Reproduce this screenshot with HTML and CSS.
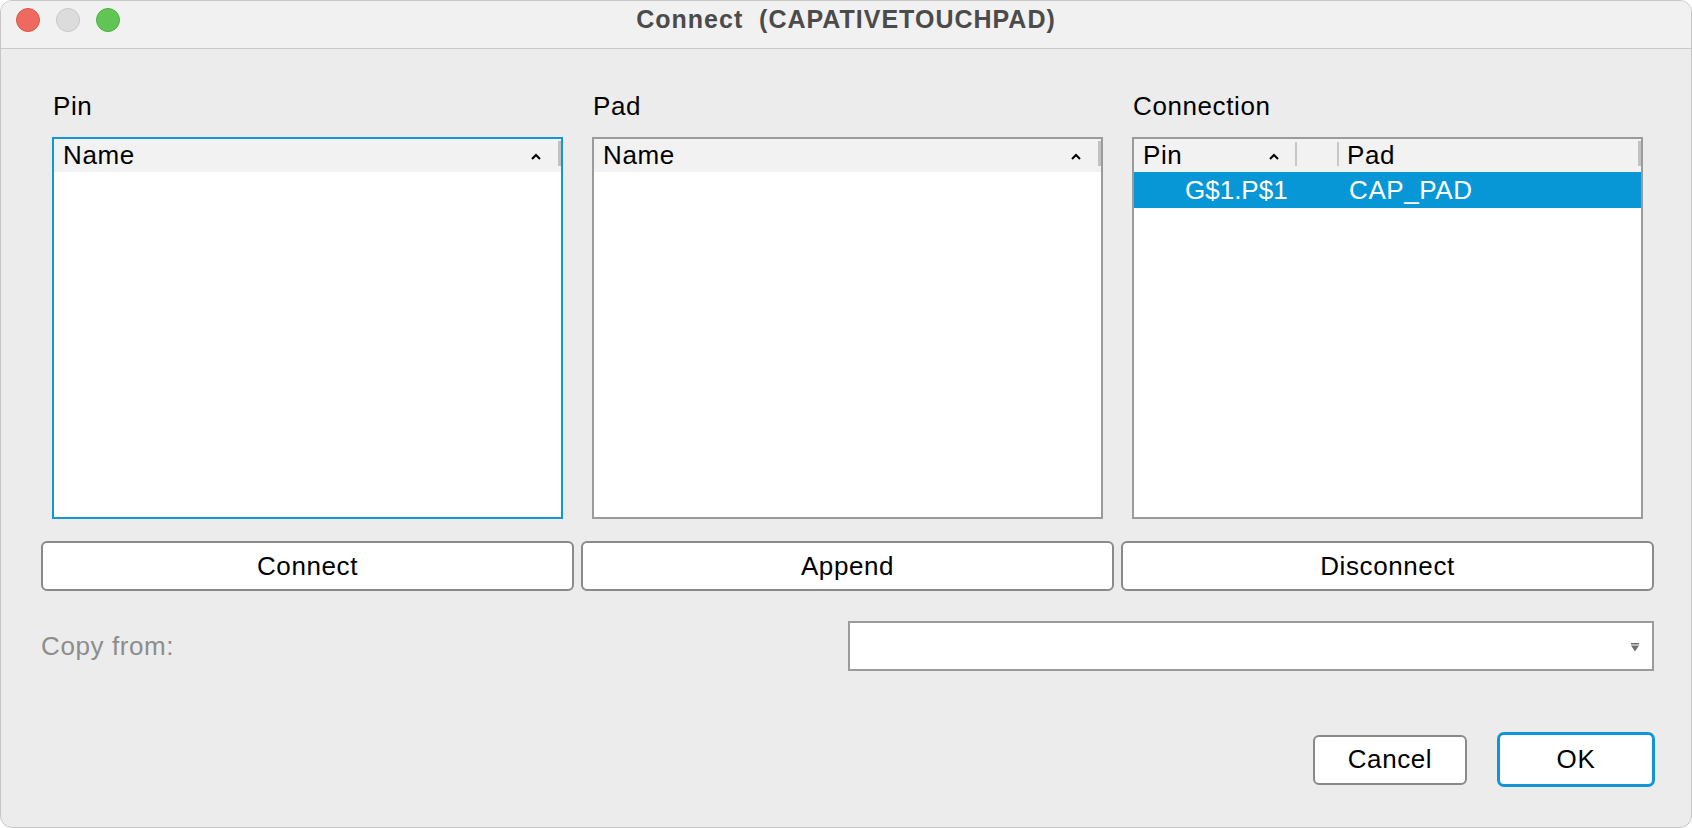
FILE: index.html
```html
<!DOCTYPE html>
<html lang="en">
<head>
<meta charset="utf-8">
<title>Connect (CAPATIVETOUCHPAD)</title>
<link rel="stylesheet" href="styles.css">
</head>
<body>
<div class="window">
  <header class="titlebar">
    <div class="lights">
      <span class="light red"></span>
      <span class="light gray"></span>
      <span class="light green"></span>
    </div>
    <div class="title">Connect&nbsp; (CAPATIVETOUCHPAD)</div>
    <div class="spacer"></div>
  </header>

  <main class="content">
    <section class="lists">
      <div class="col">
        <div class="label">Pin</div>
        <div class="listbox focused">
          <div class="thead">
            <div class="th th-wide">
              <span>Name</span>
              <svg class="caret" width="10" height="7" viewBox="0 0 10 7"><polyline points="1,6 5,2 9,6" fill="none" stroke="#000" stroke-width="2"/></svg>
            </div>
            <span class="stub"></span>
          </div>
          <div class="tbody"></div>
        </div>
      </div>

      <div class="col">
        <div class="label">Pad</div>
        <div class="listbox">
          <div class="thead">
            <div class="th th-wide">
              <span>Name</span>
              <svg class="caret" width="10" height="7" viewBox="0 0 10 7"><polyline points="1,6 5,2 9,6" fill="none" stroke="#000" stroke-width="2"/></svg>
            </div>
            <span class="stub"></span>
          </div>
          <div class="tbody"></div>
        </div>
      </div>

      <div class="col">
        <div class="label">Connection</div>
        <div class="listbox">
          <div class="thead">
            <div class="th th-pin">
              <span>Pin</span>
              <svg class="caret" width="10" height="7" viewBox="0 0 10 7"><polyline points="1,6 5,2 9,6" fill="none" stroke="#000" stroke-width="2"/></svg>
            </div>
            <span class="sep"></span>
            <div class="th th-blank"></div>
            <span class="sep"></span>
            <div class="th th-pad"><span>Pad</span></div>
            <span class="stub"></span>
          </div>
          <div class="tbody">
            <div class="row selected">
              <div class="td td-pin">G$1.P$1</div>
              <div class="td td-blank"></div>
              <div class="td td-pad">CAP_PAD</div>
            </div>
          </div>
        </div>
      </div>
    </section>

    <div class="actions">
      <button class="btn">Connect</button>
      <button class="btn">Append</button>
      <button class="btn">Disconnect</button>
    </div>

    <div class="copy-row">
      <span class="copy-label">Copy from:</span>
      <div class="combo">
        <svg class="combo-arrow" width="10" height="9" viewBox="0 0 10 9"><rect x="1" y="0" width="8" height="1.5" fill="#6e6e6e"/><polygon points="1,2.5 9,2.5 5,8.5" fill="#6e6e6e"/></svg>
      </div>
    </div>

    <div class="footer">
      <button class="btn cancel">Cancel</button>
      <button class="btn ok">OK</button>
    </div>
  </main>
</div>
</body>
</html>
```

FILE: styles.css
```css
* {
  box-sizing: border-box;
}

html, body {
  margin: 0;
  padding: 0;
  background: #ffffff;
}

body {
  font-family: "Liberation Sans", Arial, sans-serif;
  font-size: 26px;
  letter-spacing: 0.6px;
  color: #000;
}

.window {
  width: 1692px;
  height: 828px;
  background: #ececec;
  border: 1px solid #c6c6c6;
  border-radius: 12px;
  overflow: hidden;
  display: flex;
  flex-direction: column;
}

/* ---------- title bar ---------- */
.titlebar {
  height: 48px;
  flex: none;
  background: #f1f1f1;
  border-bottom: 1px solid #c9c9c9;
  display: grid;
  grid-template-columns: 1fr auto 1fr;
  align-items: start;
  padding: 5px 0 0 15px;
}

.lights {
  display: flex;
  gap: 16px;
  margin-top: 2px;
}

.light {
  width: 24px;
  height: 24px;
  border-radius: 50%;
  display: block;
}

.light.red {
  background: #ee6a5e;
  border: 1px solid #d8574b;
}

.light.gray {
  background: #dcdcdc;
  border: 1px solid #c6c6c6;
}

.light.green {
  background: #60c553;
  border: 1px solid #50ad45;
}

.title {
  font-weight: bold;
  font-size: 25px;
  line-height: 26px;
  letter-spacing: 1px;
  color: #4b4b4b;
  white-space: nowrap;
  margin-left: -15px;
}

/* ---------- content ---------- */
.content {
  flex: 1;
  display: flex;
  flex-direction: column;
}

.lists {
  display: grid;
  grid-template-columns: repeat(3, 511px);
  column-gap: 29px;
  padding: 43px 0 0 51px;
}

.label {
  height: 28px;
  line-height: 28px;
  margin-bottom: 17px;
  padding-left: 1px;
}

.listbox {
  height: 382px;
  border: 2px solid #9b9b9b;
  background: #ffffff;
  display: flex;
  flex-direction: column;
}

.listbox.focused {
  border-color: #1396d8;
}

.thead {
  height: 33px;
  flex: none;
  background: #f2f2f2;
  display: flex;
  align-items: stretch;
}

.th {
  display: flex;
  align-items: center;
  line-height: 33px;
  padding-left: 9px;
}

.th-wide {
  flex: 1;
  justify-content: space-between;
  padding-right: 17px;
}

.th-pin {
  width: 161px;
  justify-content: space-between;
  padding-right: 16px;
}

.th-blank {
  width: 40px;
  padding: 0;
}

.th-pad {
  flex: 1;
  padding-left: 8px;
}

.caret {
  display: block;
  margin-top: 2px;
}

.sep {
  width: 2px;
  height: 24px;
  margin-top: 3px;
  background: #c8c8c8;
  flex: none;
}

.stub {
  width: 3px;
  height: 25px;
  margin-top: 2px;
  background: #c2c2c2;
  flex: none;
}

.tbody {
  flex: 1;
}

.row {
  height: 36px;
  display: flex;
  line-height: 36px;
}

.row.selected {
  background: #0897d6;
  color: #ffffff;
}

.td-pin {
  width: 163px;
  padding-left: 51px;
  letter-spacing: 0;
}

.td-blank {
  width: 42px;
}

.td-pad {
  flex: 1;
  padding-left: 10px;
}

/* ---------- buttons ---------- */
.btn {
  font-family: "Liberation Sans", Arial, sans-serif;
  font-size: 26px;
  letter-spacing: 0.6px;
  color: #000;
  background: #ffffff;
  border: 2px solid #8a8a8a;
  border-radius: 6px;
  height: 50px;
  padding: 0;
  margin: 0;
}

.actions {
  display: grid;
  grid-template-columns: repeat(3, 533px);
  column-gap: 7px;
  padding-left: 40px;
  margin-top: 22px;
}

.copy-row {
  display: flex;
  align-items: center;
  justify-content: space-between;
  padding: 0 37px 0 40px;
  margin-top: 30px;
}

.copy-label {
  color: #8d8d8d;
}

.combo {
  width: 806px;
  height: 50px;
  background: #ffffff;
  border: 2px solid #9b9b9b;
  display: flex;
  align-items: center;
  justify-content: flex-end;
  padding-right: 12px;
}

.combo-arrow {
  display: block;
  margin-top: 2px;
}

.footer {
  display: flex;
  justify-content: flex-end;
  align-items: center;
  gap: 30px;
  padding-right: 36px;
  margin-top: 61px;
}

.btn.cancel {
  width: 154px;
}

.btn.ok {
  width: 158px;
  height: 55px;
  border: 3px solid #1195d8;
  border-radius: 7px;
}
```
